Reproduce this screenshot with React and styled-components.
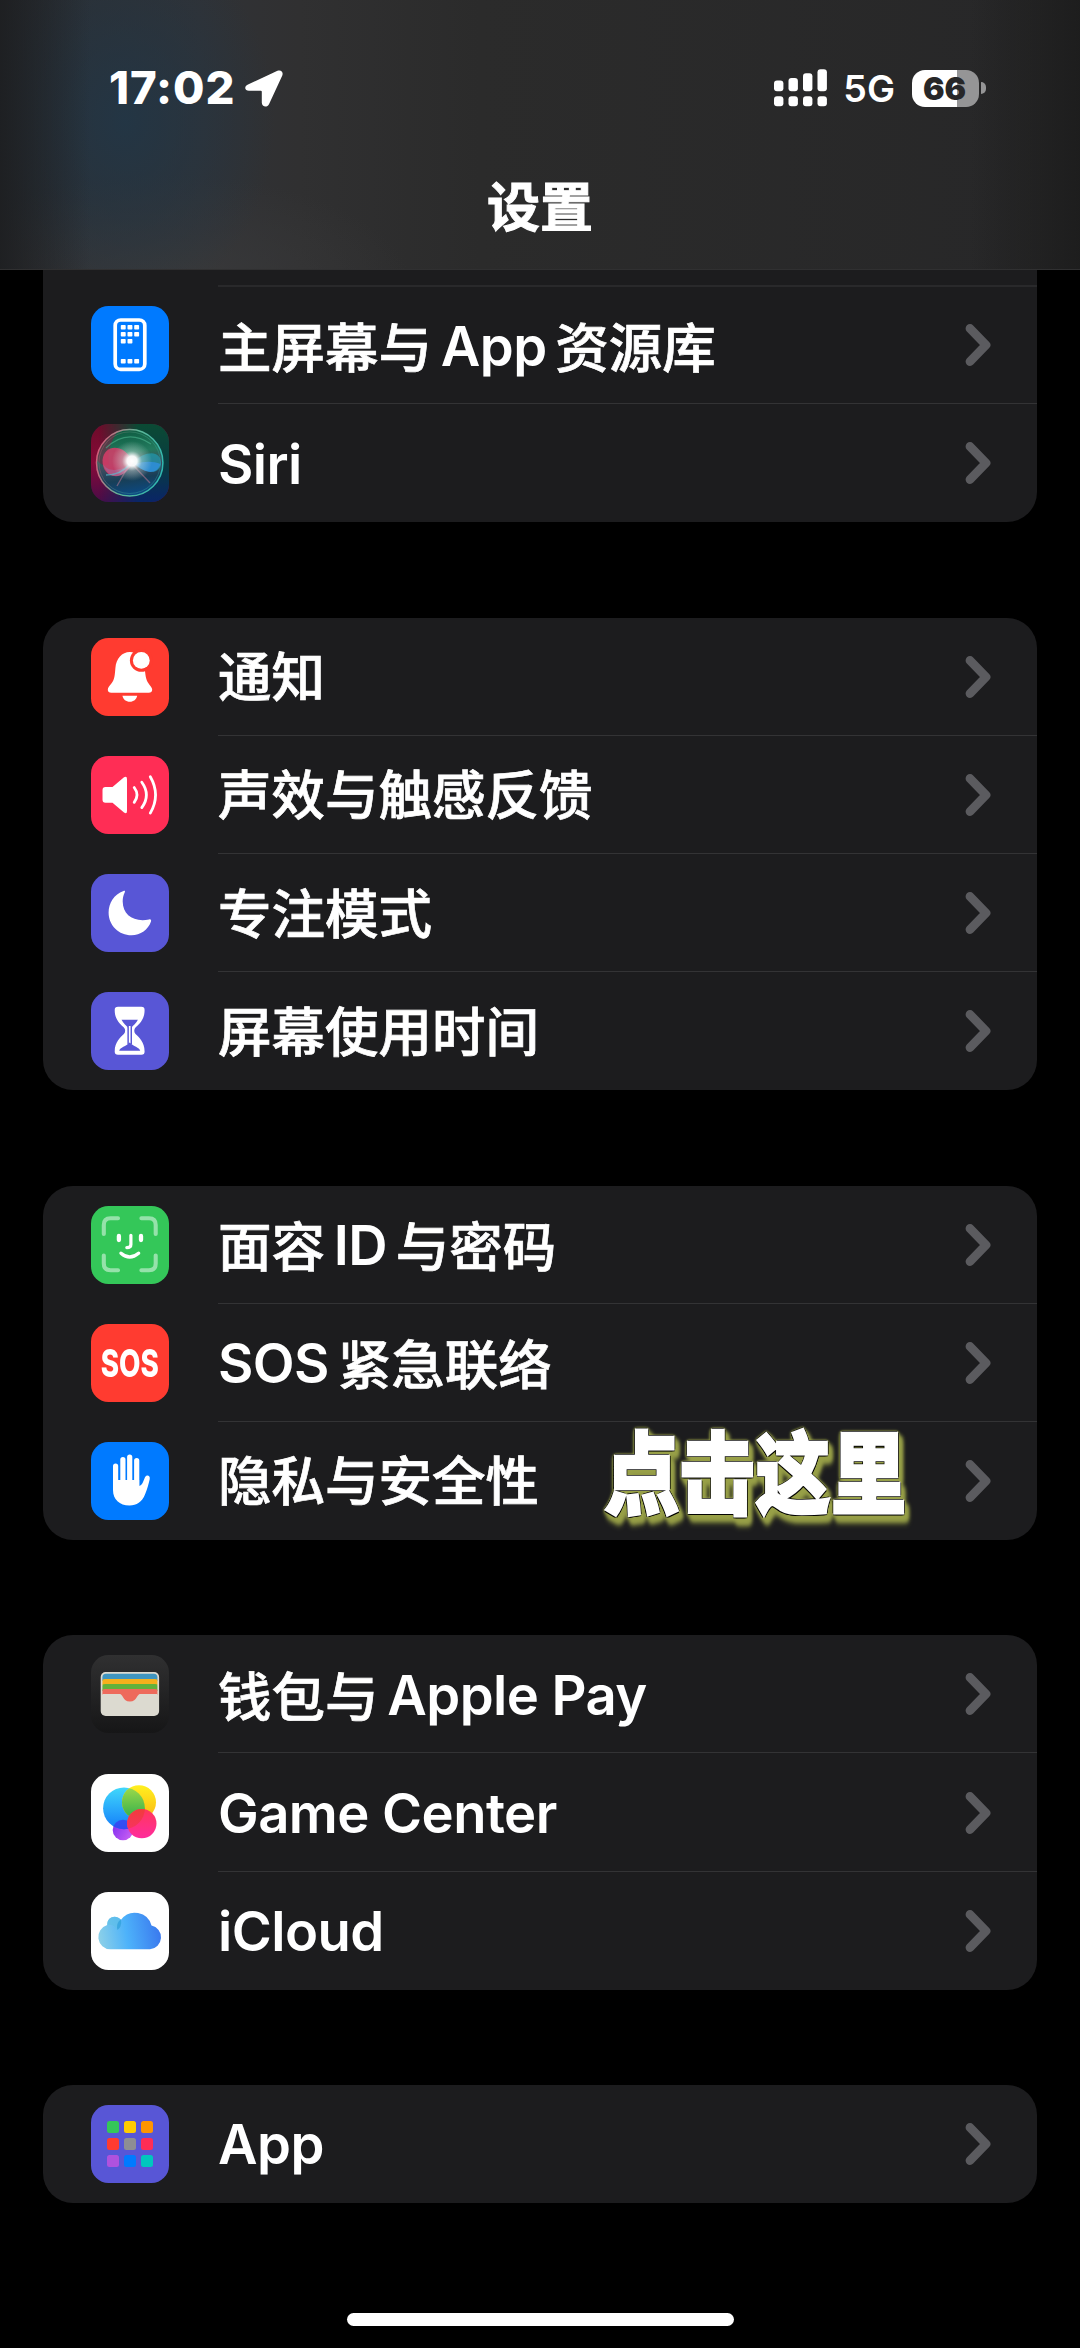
import React from 'react';
import styled, { createGlobalStyle } from 'styled-components';

const GlobalStyle = createGlobalStyle`
  body {
    margin: 0;
    background: #000;
    color: #fff;
    font-family: Inter, 'Noto Sans CJK SC', sans-serif;
  }
`;

const HomeScreenIcon = () => (
  <Glyph>
    <rect x="24.2" y="14" width="29.6" height="49.4" rx="5.5" fill="none" stroke="#fff" strokeWidth="3.7" />
    {[19, 26, 33, 53].map((y) =>
      [29.8, 36.5, 43.2]
        .filter((x) => !(y === 33 && x > 43))
        .map((x) => <rect key={`${x}-${y}`} x={x} y={y} width="4.9" height="4.5" rx="0.8" fill="#fff" />)
    )}
  </Glyph>
);

const SiriIcon = () => (
  <Glyph>
    <defs>
      <linearGradient id="siriLeft" x1="0" y1="0" x2="0" y2="1">
        <stop offset="0" stopColor="#6d0c2a" />
        <stop offset="0.5" stopColor="#860a38" />
        <stop offset="1" stopColor="#4a0c48" />
      </linearGradient>
      <linearGradient id="siriRight" x1="0" y1="0" x2="0" y2="1">
        <stop offset="0" stopColor="#0b4a34" />
        <stop offset="0.55" stopColor="#083b42" />
        <stop offset="1" stopColor="#0a2567" />
      </linearGradient>
      <linearGradient id="siriFade" x1="0" y1="0" x2="1" y2="0">
        <stop offset="0.1" stopColor="#000" />
        <stop offset="0.6" stopColor="#fff" />
      </linearGradient>
      <mask id="siriMask">
        <rect width="78" height="78" fill="url(#siriFade)" />
      </mask>
      <linearGradient id="siriOrb" x1="0.4" y1="0" x2="0.55" y2="1">
        <stop offset="0" stopColor="#0d5b40" />
        <stop offset="0.35" stopColor="#237a5e" />
        <stop offset="0.55" stopColor="#3c4c5f" />
        <stop offset="0.75" stopColor="#173f58" />
        <stop offset="1" stopColor="#0b4a86" />
      </linearGradient>
      <linearGradient id="siriRing" x1="0" y1="0.3" x2="1" y2="0.6">
        <stop offset="0" stopColor="#d85878" />
        <stop offset="0.5" stopColor="#5fb798" />
        <stop offset="1" stopColor="#2fb7b0" />
      </linearGradient>
      <radialGradient id="siriGlow">
        <stop offset="0" stopColor="#fff" />
        <stop offset="0.25" stopColor="#fff" stopOpacity="0.95" />
        <stop offset="0.5" stopColor="#d5e8e2" stopOpacity="0.4" />
        <stop offset="1" stopColor="#d5e8e2" stopOpacity="0" />
      </radialGradient>
    </defs>
    <rect width="78" height="78" fill="url(#siriLeft)" />
    <rect width="78" height="78" fill="url(#siriRight)" mask="url(#siriMask)" />
    <circle cx="38.7" cy="38.7" r="33" fill="url(#siriOrb)" />
    <path d="M6 36A33 33 0 0 1 26 8C20 18 16 28 18 40Q12 44 6 36Z" fill="#7c1f42" opacity="0.6" />
    <path d="M42 38C32 18 13 21 11.5 36C11 55 32 59 42 38Z" fill="#d83c68" opacity="0.85" />
    <path d="M12 40C18 50 32 46 42 38C34 55 18 58 12 40Z" fill="#a8608f" opacity="0.75" />
    <path d="M42 38C50 48 68 53 70 40C70 25 54 27 42 38Z" fill="#1f9bb0" opacity="0.7" />
    <path d="M44 40C54 50 66 51 69.5 40C62 37 54 37 44 40Z" fill="#2f8fe0" opacity="0.8" />
    <path d="M38 41L26 62M42 41L59 59" stroke="#c47b95" strokeWidth="1.4" opacity="0.5" />
    <path d="M15 51Q30 51 39 40" stroke="#5db6cc" strokeWidth="1.6" fill="none" opacity="0.7" />
    <path d="M15 24Q36 4 60 20" stroke="#4db68f" strokeWidth="1.2" fill="none" opacity="0.6" />
    <circle cx="41" cy="37" r="20" fill="url(#siriGlow)" />
    <circle cx="38.7" cy="38.7" r="33.2" fill="none" stroke="url(#siriRing)" strokeWidth="1.5" />
    <circle cx="38.7" cy="38.7" r="30.8" fill="none" stroke="url(#siriRing)" strokeWidth="0.9" opacity="0.35" />
  </Glyph>
);

const BellIcon = () => (
  <Glyph>
    <path
      d="M38.8 14C31 14 25.2 20.5 24.4 30C23.8 37 23.6 41.5 20.4 45.6C18.4 48.2 16.8 49.6 16.8 51.7C16.8 53.7 18.1 54.7 20.3 54.7H57.7C59.9 54.7 61.2 53.7 61.2 51.7C61.2 49.6 59.2 48.2 57.6 45.6C54.8 41.5 54.4 37 53.7 30C52.7 20.5 46.6 14 38.8 14Z"
      fill="#fff"
    />
    <path d="M31.4 57.7H46.2C45.4 61.4 42.6 63.7 38.8 63.7S32.2 61.4 31.4 57.7Z" fill="#fff" />
    <circle cx="50.3" cy="22.4" r="11.4" fill="#ff3b30" />
    <circle cx="50.3" cy="22.4" r="8.4" fill="#fff" />
  </Glyph>
);

const SpeakerIcon = () => (
  <Glyph>
    <path
      d="M14.5 31H21.5L33 21.3Q36 19.5 36 23V55Q36 58.5 33 56.5L21.5 46.7H14.5Q11.5 46.7 11.5 43.7V34Q11.5 31 14.5 31Z"
      fill="#fff"
    />
    <path
      d="M43.2 31.5Q48.8 38.9 43.2 46.3M50.8 26.2Q60 38.9 50.8 51.6M59.3 20.7Q69.8 38.9 59.3 57.1"
      fill="none"
      stroke="#fff"
      strokeWidth="2.8"
      strokeLinecap="round"
    />
  </Glyph>
);

const MoonIcon = () => (
  <Glyph>
    <path
      d="M32.5 17C23 20.5 17.6 29 17.6 38.5C17.6 51.5 28 61.3 40.5 61.3C49.5 61.3 57.2 55.8 60 47.6C60.5 46 59.6 45 58 45.5C43 48.5 31.7 41 31.7 27.5C31.7 24 32.4 21.3 33.7 18.5C34.4 17 33.8 16.5 32.5 17Z"
      fill="#fff"
    />
  </Glyph>
);

const HourglassIcon = () => (
  <Glyph>
    <path
      d="M27 14.7H50.4Q53.6 14.7 53.6 18C53.6 28 48 32 44.5 35.5Q42 38.7 44.5 42C48 45.5 53.6 50 53.6 59.4Q53.6 62.7 50.4 62.7H27Q23.7 62.7 23.7 59.4C23.7 50 29.4 45.5 32.9 42Q35.4 38.7 32.9 35.5C29.4 32 23.7 28 23.7 18Q23.7 14.7 27 14.7Z"
      fill="#fff"
    />
    <path d="M30.5 27.7H46.9C45.5 31 42 33.5 40.3 35.7H37C35.4 33.5 32 31 30.5 27.7Z" fill="#5856d6" />
    <path d="M38.7 35V52" stroke="#5856d6" strokeWidth="4.6" />
    <path d="M38.7 34V52" stroke="#fff" strokeWidth="1.7" />
    <path d="M28.2 58.8C29 55.5 35 54.5 38.7 50.6C42.4 54.5 48.4 55.5 49.2 58.8Z" fill="#5856d6" />
  </Glyph>
);

const FaceIdIcon = () => (
  <Glyph>
    <g fill="none" stroke="#fff" strokeLinecap="round">
      <path
        d="M12.8 28V19Q12.8 12.3 19.5 12.3H27M50.4 12.3H58Q64.7 12.3 64.7 19V28M64.7 49.5V57.5Q64.7 64.2 58 64.2H50.4M27 64.2H19.5Q12.8 64.2 12.8 57.5V49.5"
        stroke="#95e2aa"
        strokeWidth="4.1"
      />
      <path d="M27.9 30V34M50 30V34" strokeWidth="4.3" />
      <path d="M39.9 29.3V38.5Q39.9 41.6 35.8 41.6" strokeWidth="3.2" />
      <path d="M30 47.2Q38.7 54.8 47.6 47.2" strokeWidth="3.4" />
    </g>
  </Glyph>
);

const SosIcon = () => <SosText>SOS</SosText>;

const HandIcon = () => (
  <Glyph>
    <path
      d="M24.6 24V44M31.9 17.5V42M38.7 15V42M45.7 18.5V44"
      stroke="#fff"
      strokeWidth="5.2"
      strokeLinecap="round"
    />
    <path
      d="M22 38H48.2V44C49.8 43.8 51 42.5 51.8 40.6L54 35.2C55.6 32.3 59.6 33.5 58.7 37.2C57.5 42 56.3 47 54 52.5C50.8 60 45.8 63.5 38.5 63.5C28.5 63.5 22 57.5 22 48Z"
      fill="#fff"
    />
  </Glyph>
);

const WalletIcon = () => (
  <Glyph>
    <defs>
      <clipPath id="walletInner">
        <rect x="11.4" y="18.8" width="55" height="40.5" rx="3.5" />
      </clipPath>
    </defs>
    <rect x="9.7" y="17" width="58.4" height="44" rx="5" fill="#dcdad0" />
    <g clipPath="url(#walletInner)">
      <rect x="11" y="18" width="56" height="8" fill="#3f95bf" />
      <path d="M11 30V26Q11 24 14 24H64Q67 24 67 26V30H11Z" fill="#f5b01c" />
      <path d="M11 36V31Q11 29 14 29H64Q67 29 67 31V36H11Z" fill="#62b13c" />
      <path d="M11 40V36Q11 34 14 34H64Q67 34 67 36V40Z" fill="#ee6a5c" />
      <rect x="11" y="39" width="56" height="22" fill="#dcdad0" />
      <path d="M27 38.5C33 38.5 31 46.6 38.9 46.6S44.8 38.5 51 38.5Z" fill="#ee6a5c" />
    </g>
  </Glyph>
);

const GameCenterIcon = () => (
  <Glyph>
    <defs>
      <linearGradient id="gcBlue" x1="0" y1="0" x2="0" y2="1">
        <stop offset="0" stopColor="#40d8fb" />
        <stop offset="1" stopColor="#147dfa" />
      </linearGradient>
      <linearGradient id="gcYellow" x1="0" y1="0" x2="0" y2="1">
        <stop offset="0" stopColor="#fff01f" />
        <stop offset="1" stopColor="#fbb714" />
      </linearGradient>
      <linearGradient id="gcGreen" x1="0" y1="0" x2="0" y2="1">
        <stop offset="0" stopColor="#a5dc4a" />
        <stop offset="1" stopColor="#2fae4c" />
      </linearGradient>
      <linearGradient id="gcPink" x1="0" y1="0" x2="0" y2="1">
        <stop offset="0" stopColor="#ff375a" />
        <stop offset="1" stopColor="#ff2c9c" />
      </linearGradient>
      <linearGradient id="gcPurple" x1="0" y1="0" x2="1" y2="0.6">
        <stop offset="0" stopColor="#7b2cf0" />
        <stop offset="1" stopColor="#c55cf2" />
      </linearGradient>
      <linearGradient id="gcRed" x1="0" y1="0" x2="0" y2="1">
        <stop offset="0" stopColor="#f03c3c" />
        <stop offset="1" stopColor="#fb2f6e" />
      </linearGradient>
      <clipPath id="gcBlueClip">
        <circle cx="33" cy="34.3" r="20.9" />
      </clipPath>
    </defs>
    <circle cx="32" cy="56" r="10.3" fill="url(#gcPurple)" />
    <circle cx="33" cy="34.3" r="20.9" fill="url(#gcBlue)" />
    <circle cx="48" cy="28.2" r="17" fill="url(#gcYellow)" />
    <g clipPath="url(#gcBlueClip)">
      <circle cx="48" cy="28.2" r="17" fill="url(#gcGreen)" />
      <circle cx="32" cy="56" r="10.3" fill="#3a3ff0" opacity="0.8" />
    </g>
    <circle cx="50.8" cy="49.6" r="14.7" fill="url(#gcPink)" />
    <g clipPath="url(#gcBlueClip)">
      <circle cx="50.8" cy="49.6" r="14.7" fill="url(#gcRed)" />
    </g>
  </Glyph>
);

const CloudIcon = () => (
  <Glyph>
    <defs>
      <linearGradient id="cloudFill" x1="0" y1="0.6" x2="1" y2="0.5">
        <stop offset="0" stopColor="#8cd0e8" />
        <stop offset="0.45" stopColor="#4db2fa" />
        <stop offset="1" stopColor="#3a78ee" />
      </linearGradient>
    </defs>
    <path
      d="M19.4 57.3A12.4 12.4 0 0 1 16.2 33C16.2 24.500 25 22.500 30 27.8A17.200 17.200 0 0 1 60.500 33.6A12 12 0 0 1 59 57.3Z"
      fill="url(#cloudFill)"
    />
    <path d="M30 27.8Q26 31 26 38A9 9 0 0 0 16.2 33C16.2 24.500 25 22.500 30 27.8Z" fill="#5fc0e6" opacity="0.6" />
    <path d="M28 29Q25 33 26.5 38Q31 35 30 27.5Z" fill="#2d9fd8" opacity="0.7" />
  </Glyph>
);

const APP_COLORS = [
  '#34c759', '#ffcc00', '#ff9500',
  '#ff3b30', '#8e8e93', '#ff2d55',
  '#af52de', '#007aff', '#00c7be',
];

const AppGridIcon = () => (
  <AppGrid>
    {APP_COLORS.map((color) => (
      <AppDot key={color} $color={color} />
    ))}
  </AppGrid>
);

const latin = (text) => ({ text, latin: true });
const cjk = (text) => ({ text });

const GROUPS = [
  {
    clipped: true,
    rows: [
      { label: [cjk('主屏幕与 '), latin('App'), cjk(' 资源库')], bg: '#007aff', icon: HomeScreenIcon },
      { label: [latin('Siri')], bg: '#123', icon: SiriIcon },
    ],
  },
  {
    rows: [
      { label: [cjk('通知')], bg: '#ff3b30', icon: BellIcon },
      { label: [cjk('声效与触感反馈')], bg: '#ff2d55', icon: SpeakerIcon },
      { label: [cjk('专注模式')], bg: '#5856d6', icon: MoonIcon },
      { label: [cjk('屏幕使用时间')], bg: '#5856d6', icon: HourglassIcon },
    ],
  },
  {
    rows: [
      { label: [cjk('面容 '), latin('ID'), cjk(' 与密码')], bg: '#34c759', icon: FaceIdIcon },
      { label: [latin('SOS'), cjk(' 紧急联络')], bg: '#ff3b30', icon: SosIcon },
      { label: [cjk('隐私与安全性')], bg: '#007aff', icon: HandIcon, callout: '点击这里' },
    ],
  },
  {
    rows: [
      { label: [cjk('钱包与 '), latin('Apple Pay')], bg: 'linear-gradient(#303031, #161617)', icon: WalletIcon },
      { label: [latin('Game Center')], bg: '#fff', icon: GameCenterIcon },
      { label: [latin('iCloud')], bg: '#fff', icon: CloudIcon },
    ],
  },
  {
    rows: [{ label: [latin('App')], bg: '#5856d6', icon: AppGridIcon }],
  },
];

const StatusBar = () => (
  <Status>
    <Clock>
      17:02
      <svg width="38" height="37" viewBox="0 0 38 37">
        <path
          d="M3 14.5L32.5 0.8C36 -0.6 38.6 2 37.3 5.4L24 34.2C22.2 38 16.8 37 16.8 32.8V21.7Q16.8 20.7 15.8 20.7H4C-0.4 20.7 -1.2 16.5 3 14.5Z"
          fill="#fff"
        />
      </svg>
    </Clock>
    <Indicators>
      <svg width="53" height="38" viewBox="0 0 53 38">
        {[11.5, 9, 4.3, 0.3].map((y, i) => (
          <g key={y} fill="#fff">
            <rect x={i * 14.5} y={y} width="9.4" height={22.3 - y} rx="3" />
            <rect x={i * 14.5} y="27.3" width="9.4" height="10" rx="3" />
          </g>
        ))}
      </svg>
      <Network>5G</Network>
      <Battery>
        <BatteryBody>66</BatteryBody>
        <BatteryNub />
      </Battery>
    </Indicators>
  </Status>
);

const SettingsRow = ({ row }) => {
  const Icon = row.icon;

  return (
    <Row>
      <Tile $bg={row.bg}>
        <Icon />
      </Tile>
      <RowBody>
        <Label>
          {row.label.map((run) =>
            run.latin ? <Latin key={run.text}>{run.text}</Latin> : <span key={run.text}>{run.text}</span>
          )}
        </Label>
        <svg width="28" height="44" viewBox="0 0 28 44">
          <path
            d="M6 5.5L22 22L6 38.5"
            fill="none"
            stroke="#5b5b5f"
            strokeWidth="8.8"
            strokeLinecap="round"
            strokeLinejoin="round"
          />
        </svg>
        {row.callout && <Callout>{row.callout}</Callout>}
      </RowBody>
    </Row>
  );
};

export default function App() {
  return (
    <Screen>
      <GlobalStyle />
      <Header>
        <StatusBar />
        <Title>设置</Title>
      </Header>
      <List>
        {GROUPS.map((group, i) => (
          <Group key={i} $clipped={group.clipped}>
            {group.rows.map((row, j) => (
              <SettingsRow key={j} row={row} />
            ))}
          </Group>
        ))}
      </List>
      <HomeIndicator />
    </Screen>
  );
}

const Screen = styled.div`
  display: flex;
  flex-direction: column;
  width: 1080px;
  height: 2348px;
  overflow: hidden;
  background: #000;
`;

const Header = styled.header`
  box-sizing: border-box;
  display: flex;
  flex-direction: column;
  flex: none;
  height: 270px;
  border-bottom: 1px solid #303031;
  background:
    linear-gradient(90deg, rgba(28, 29, 31, 0.85) 0, rgba(28, 29, 31, 0) 90px),
    linear-gradient(270deg, rgba(27, 27, 27, 0.8) 0, rgba(30, 30, 30, 0) 110px),
    radial-gradient(ellipse 150px 190px at 125px 120px, rgba(34, 54, 70, 0.9), rgba(36, 50, 64, 0)),
    radial-gradient(ellipse 240px 110px at 170px 285px, #39393a, rgba(56, 56, 57, 0)),
    linear-gradient(90deg, #2a2e33 0, #303236 200px, #303031 300px, #2b2b2b 480px, #272728 100%);
`;

const Status = styled.div`
  display: flex;
  justify-content: space-between;
  align-items: center;
  height: 56px;
  padding: 60px 94px 0 109px;
`;

const Clock = styled.div`
  display: flex;
  align-items: center;
  gap: 10px;
  font-size: 45.5px;
  font-weight: 800;
  letter-spacing: 0.9px;
  line-height: 56px;
`;

const Indicators = styled.div`
  display: flex;
  align-items: center;
`;

const Network = styled.span`
  margin: 2px 17px 0 16px;
  font-size: 37.5px;
  font-weight: 600;
  line-height: 46px;
`;

const Battery = styled.div`
  display: flex;
  align-items: center;
  gap: 2px;
`;

const BatteryBody = styled.div`
  width: 67px;
  height: 37px;
  border-radius: 13px;
  background: linear-gradient(90deg, #fff 45px, #959596 45px);
  color: #272728;
  font-size: 32px;
  font-weight: 900;
  line-height: 37px;
  text-align: center;
  text-indent: -2px;
`;

const BatteryNub = styled.div`
  width: 5px;
  height: 12px;
  border-radius: 0 5px 5px 0;
  background: #959596;
`;

const Title = styled.h1`
  margin: 52px 0 0;
  font-size: 53px;
  font-weight: 700;
  line-height: 80px;
  text-align: center;
  -webkit-text-stroke: 1px #fff;
`;

const List = styled.main`
  display: flex;
  flex-direction: column;
  gap: 95.3px;
  padding: 0 43px;
`;

const Group = styled.section`
  padding-top: ${(p) => (p.$clipped ? '16.2px' : '0')};
  border-radius: ${(p) => (p.$clipped ? '0 0 30px 30px' : '30px')};
  background: ${(p) =>
    p.$clipped ? 'linear-gradient(#29292b, #29292b) 175px 15px / 100% 2px no-repeat, #1c1c1e' : '#1c1c1e'};
`;

const RowBody = styled.div`
  position: relative;
  display: flex;
  flex: 1;
  justify-content: space-between;
  align-items: center;
  align-self: stretch;
  margin-left: 49px;
  padding-right: 45px;
`;

const Row = styled.div`
  display: flex;
  align-items: center;
  height: 118.15px;
  padding-left: 48px;

  & + & ${RowBody} {
    box-shadow: 0 -1px 0 #333335;
  }
`;

const Tile = styled.div`
  display: flex;
  flex: none;
  align-items: center;
  justify-content: center;
  width: 78px;
  height: 78px;
  overflow: hidden;
  border-radius: 17.5px;
  background: ${(p) => p.$bg};
`;

const Glyph = styled.svg.attrs({ viewBox: '0 0 78 78' })`
  display: block;
  width: 78px;
  height: 78px;
`;

const SosText = styled.span`
  font-size: 38px;
  font-weight: 800;
  line-height: 1;
  transform: scaleX(0.73);
`;

const AppGrid = styled.div`
  display: grid;
  grid-template-columns: repeat(3, 12.3px);
  gap: 4.5px;
`;

const AppDot = styled.span`
  height: 12.3px;
  border-radius: 2.5px;
  background: ${(p) => p.$color};
`;

const Label = styled.span`
  padding-top: 3px;
  font-size: 53.5px;
  font-weight: 500;
  line-height: 80px;
  white-space: pre;
  word-spacing: -5.5px;
  -webkit-text-stroke: 0.7px #fff;
`;

const Latin = styled.span`
  font-size: 54.4px;
  font-weight: 600;
  letter-spacing: -0.55px;
  word-spacing: 0;
  vertical-align: 1.5px;
  -webkit-text-stroke: 0;
`;

const Callout = styled.span`
  position: absolute;
  top: -7px;
  left: 386px;
  font-size: 90px;
  font-weight: 900;
  line-height: 120px;
  white-space: nowrap;
  transform: scaleX(0.84);
  transform-origin: 0 50%;
  -webkit-text-stroke: 2.5px #fff;
  text-shadow:
    2px 0 #000, -2px 0 #000, 0 2px #000, 0 -2px #000,
    1.5px 1.5px #000, -1.5px 1.5px #000, 1.5px -1.5px #000, -1.5px -1.5px #000;
  filter: drop-shadow(0 0 1px #98a048) drop-shadow(4px 5px 2px #98a048) drop-shadow(0 2px 2px #8a9240);
`;

const HomeIndicator = styled.div`
  align-self: center;
  width: 387px;
  height: 13px;
  margin-top: 110px;
  border-radius: 7px;
  background: #fff;
`;
